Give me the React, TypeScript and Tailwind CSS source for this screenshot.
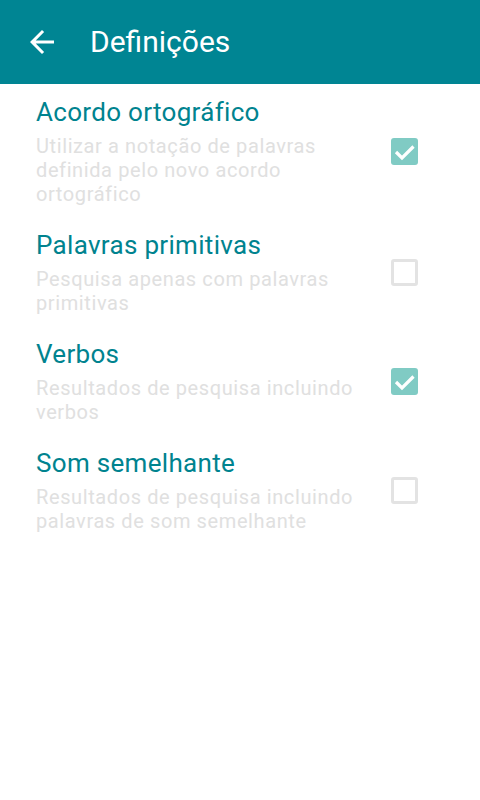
const settings = [
  {
    title: "Acordo ortográfico",
    lines: ["Utilizar a notação de palavras", "definida pelo novo acordo", "ortográfico"],
    checked: true,
  },
  {
    title: "Palavras primitivas",
    lines: ["Pesquisa apenas com palavras", "primitivas"],
    checked: false,
  },
  {
    title: "Verbos",
    lines: ["Resultados de pesquisa incluindo", "verbos"],
    checked: true,
  },
  {
    title: "Som semelhante",
    lines: ["Resultados de pesquisa incluindo", "palavras de som semelhante"],
    checked: false,
  },
];

function Checkbox({ checked }: { checked: boolean }) {
  if (checked) {
    return (
      <div className="w-[27px] h-[27px] rounded-[3px] bg-[#80cbc4]">
        <svg width="27" height="27" viewBox="0 0 27 27">
          <path d="M5 14l6 6L22.5 8.5" fill="none" stroke="#fff" strokeWidth="3.2" />
        </svg>
      </div>
    );
  }
  return <div className="w-[27px] h-[27px] rounded-[3px] border-[3px] border-[#e3e3e3]" />;
}

export default function App() {
  return (
    <div className="w-[480px] h-[800px] bg-white font-['Roboto',sans-serif]">
      {/* Toolbar */}
      <header className="flex items-center h-[84px] bg-[#008593] text-white">
        <div className="flex items-center justify-center w-9 h-9 ml-6">
          <svg width="36" height="36" viewBox="0 0 24 24" fill="#fff">
            <path d="M20 11H7.83l5.59-5.59L12 4l-8 8 8 8 1.41-1.41L7.83 13H20v-2z" />
          </svg>
        </div>
        <h1 className="ml-[30px] text-[30px] leading-none">Definições</h1>
      </header>

      {/* List */}
      <div className="flex flex-col">
        {settings.map((s) => (
          <div key={s.title} className="flex items-center pl-9 pr-[62px] pt-3 pb-[11px]">
            <div className="flex-1">
              <div className="text-[26px] leading-8 tracking-[0.012em] text-[#00838f]">{s.title}</div>
              <div className="mt-1.5 text-[20px] leading-6 tracking-[0.03em] text-[#e0e0e0]">
                {s.lines.map((l) => (
                  <div key={l}>{l}</div>
                ))}
              </div>
            </div>
            <Checkbox checked={s.checked} />
          </div>
        ))}
      </div>
    </div>
  );
}
